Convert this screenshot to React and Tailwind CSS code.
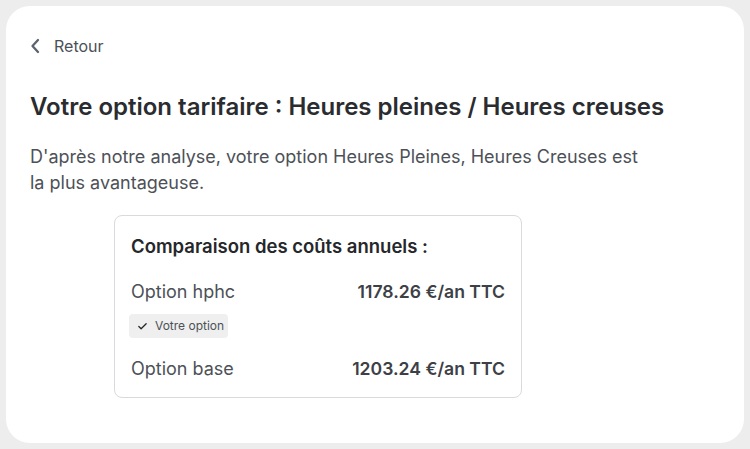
import { Check } from 'lucide-react';

export default function App() {
  return (
    <div className="min-h-screen bg-[#ecedec] p-[6px]" style={{ fontFamily: 'Inter, "Noto Sans", sans-serif' }}>
      <div className="h-[437px] rounded-[24px] bg-white px-6 pt-[24px]">
        {/* ── Back link ─────────────────────────────── */}
        <div className="flex h-8 items-center gap-[14px] text-[16px] text-[#4b5059]">
          <svg width="10" height="16" viewBox="0 0 10 16" fill="none" className="text-[#5b6270]">
            <path d="M8 2L2.5 8L8 14" stroke="currentColor" strokeWidth="2.3" strokeLinecap="round" strokeLinejoin="round" />
          </svg>
          <span>Retour</span>
        </div>

        <h1 className="mt-[29px] text-[24px] font-semibold leading-[32px] text-[#2a2c30]">
          Votre option tarifaire : Heures pleines / Heures creuses
        </h1>

        <p className="mt-[21px] max-w-[620px] text-[18px] leading-[26px] text-[#4d5157]">
          D'après notre analyse, votre option Heures Pleines, Heures Creuses est la plus avantageuse.
        </p>

        {/* ── Comparison card ───────────────────────── */}
        <div className="ml-[84px] mt-[19px] w-[408px] rounded-lg border border-[#d9dadc] pl-[14px] pr-4 pt-[17px] pb-[15px]">
          <h2 className="pl-[2px] text-[18.5px] font-semibold leading-[26px] text-[#25272b]">
            Comparaison des coûts annuels :
          </h2>

          <div className="mt-[20px] flex items-center justify-between pl-[2px] text-[18px] leading-[26px]">
            <span className="text-[#4d5157]">Option hphc</span>
            <span className="text-[17.6px] font-semibold text-[#3d4046]">1178.26 €/an TTC</span>
          </div>
          <div className="mt-[9px] flex">
            <span className="flex h-6 items-center gap-[7px] rounded-[4px] bg-[#eeefee] pl-[8px] pr-[4px] text-[12px] text-[#4d5157]">
              <Check size={11} strokeWidth={2.8} className="text-[#25272b]" />
              Votre option
            </span>
          </div>

          <div className="mt-[18px] flex items-center justify-between pl-[2px] text-[18px] leading-[26px]">
            <span className="text-[#4d5157]">Option base</span>
            <span className="text-[17.6px] font-semibold text-[#3d4046]">1203.24 €/an TTC</span>
          </div>
        </div>
      </div>
    </div>
  );
}
